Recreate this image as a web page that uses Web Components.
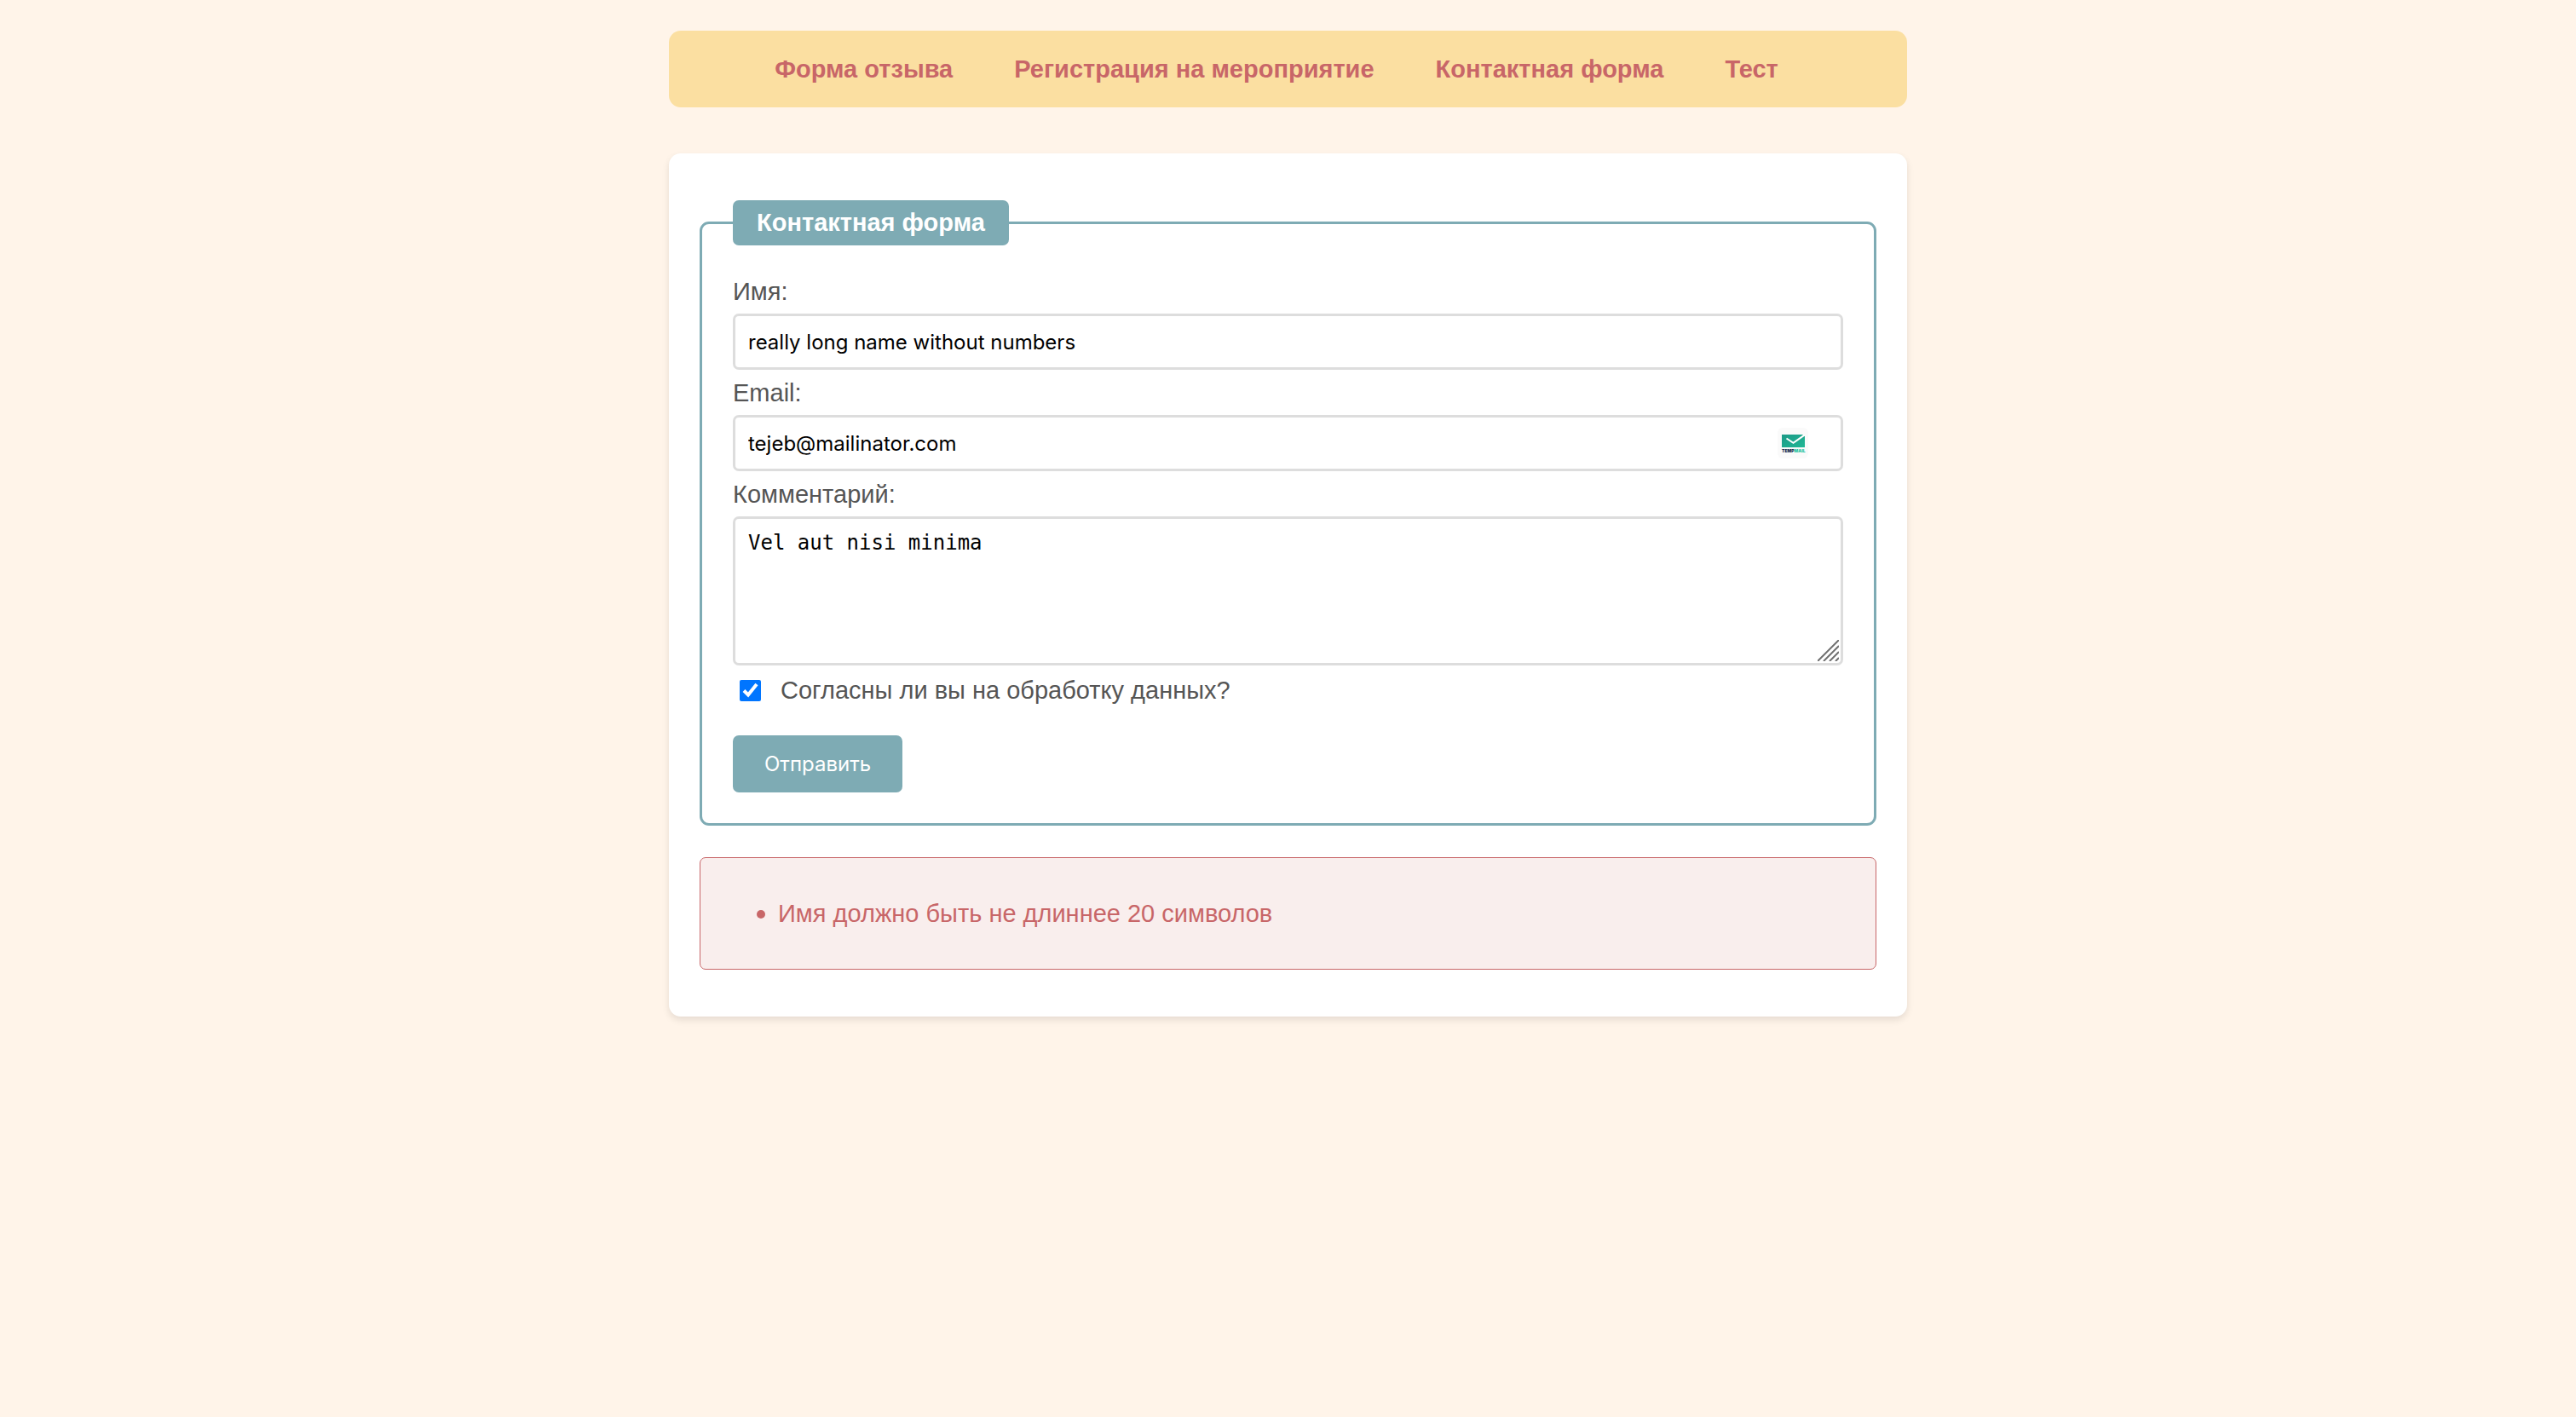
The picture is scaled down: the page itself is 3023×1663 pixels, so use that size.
<!DOCTYPE html>
<html lang="ru">
<head>
<meta charset="utf-8">
<meta name="viewport" content="width=device-width, initial-scale=1">
<title>Контактная форма</title>
<style>
  :root {
    --paper: #fff4e9;
    --sand: #fbdfa1;
    --teal: #7eabb4;
    --red: #c86668;
    --blush: #f9eeed;
    --line: #dddddd;
    --ui: Inter, "Liberation Sans", sans-serif;
    --mono: "DejaVu Sans Mono", monospace;
  }
  body {
    margin: 0;
    padding: 36px;
    background: var(--paper);
    color: #555;
    font: 29px/35px "Liberation Sans", Arial, sans-serif;
  }
  main, site-nav { width: 100%; max-width: 1453px; margin: 0 auto; }
</style>
</head>
<body>
<site-nav>
  <nav-link href="#feedback">Форма отзыва</nav-link>
  <nav-link href="#event">Регистрация на мероприятие</nav-link>
  <nav-link href="#contact">Контактная форма</nav-link>
  <nav-link href="#test">Тест</nav-link>
</site-nav>
<main>
  <form-card>
    <field-group legend="Контактная форма">
      <text-field label="Имя:" name="name" value="really long name without numbers"></text-field>
      <text-field label="Email:" name="email" type="email" value="tejeb@mailinator.com"><temp-mail slot="badge"></temp-mail></text-field>
      <text-area label="Комментарий:" name="comment" value="Vel aut nisi minima"></text-area>
      <check-field label="Согласны ли вы на обработку данных?" checked></check-field>
      <submit-button>Отправить</submit-button>
    </field-group>
    <error-list><error-item>Имя должно быть не длиннее 20 символов</error-item></error-list>
  </form-card>
</main>
<script>
  const define = (name, render) => customElements.define(name, class extends HTMLElement {
    connectedCallback() {
      if (this.shadowRoot) return;
      this.attachShadow({ mode: 'open' }).innerHTML =
        '<style>*{box-sizing:border-box}:host{display:block;box-sizing:border-box}</style>' + render(this);
    }
  });
  const attr = (el, name) => el.getAttribute(name) || '';

  define('site-nav', () => `
    <style>
      nav { display: flex; flex-wrap: wrap; justify-content: center; gap: 18px 72px;
            padding: 28px 27px 27px 0; border-radius: 14px; background: var(--sand); }
    </style>
    <nav><slot></slot></nav>`);

  define('nav-link', el => `
    <style>a { display: block; color: var(--red); font-weight: bold; text-decoration: none; }</style>
    <a href="${attr(el, 'href')}"><slot></slot></a>`);

  define('form-card', () => `
    <style>
      :host { margin-top: 54px; padding: 55px 36px; border-radius: 14px; background: #fff;
              box-shadow: 0 4px 9px rgba(0, 0, 0, .1); }
    </style>
    <slot></slot>`);

  define('field-group', el => `
    <style>
      fieldset { min-width: 0; margin: 0; padding: 37px 36px 36px; border: 3px solid var(--teal); border-radius: 11px; }
      legend { padding: 9px 28px; border-radius: 7px; background: var(--teal); color: #fff; font-weight: bold; }
    </style>
    <fieldset><legend>${attr(el, 'legend')}</legend><slot></slot></fieldset>`);

  define('text-field', el => `
    <style>
      :host { margin-bottom: 10px; }
      label { display: block; margin-bottom: 8px; }
      .box { position: relative; }
      input { display: block; width: 100%; height: 66px; padding: 0 15px; border: 3px solid var(--line);
              border-radius: 7px; background: #fff; color: #000; font: 24px/30px var(--ui); outline: 0; }
      ::slotted(*) { position: absolute; right: 41px; top: 15px; }
    </style>
    <label for="field">${attr(el, 'label')}</label>
    <div class="box">
      <input id="field" type="${attr(el, 'type') || 'text'}" name="${attr(el, 'name')}" value="${attr(el, 'value')}" spellcheck="false">
      <slot name="badge"></slot>
    </div>`);

  define('temp-mail', () => `
    <style>svg { display: block; width: 36px; height: 36px; }</style>
    <svg viewBox="0 0 36 36" aria-hidden="true">
      <defs><linearGradient id="g" x1="0" y1="0" x2="1" y2="1"><stop offset="0" stop-color="#1c9a87"/><stop offset="1" stop-color="#21b795"/></linearGradient></defs>
      <rect width="36" height="36" rx="6" fill="#fafafa"/>
      <path d="M5 8H29L32 10V23H5Z" fill="url(#g)"/>
      <path d="M10.5 12.5L18.5 17.8L31.5 8.6" fill="none" stroke="#fff" stroke-width="2"/>
      <text x="5" y="29" font-family="Inter, sans-serif" font-size="5" font-weight="900" fill="#14284b">TEMP<tspan fill="#27c3a0">MAIL</tspan></text>
    </svg>`);

  define('text-area', el => `
    <style>
      :host { margin-bottom: 12px; }
      label { display: block; margin-bottom: 8px; }
      .box { position: relative; }
      textarea { display: block; width: 100%; height: 175px; padding: 14px 15px; border: 3px solid var(--line);
                 border-radius: 7px; background: #fff; color: #000; font: 24px/28px var(--mono); resize: none; outline: 0; }
      svg { position: absolute; right: 5px; bottom: 5px; width: 25px; height: 25px; pointer-events: none; }
    </style>
    <label for="field">${attr(el, 'label')}</label>
    <div class="box">
      <textarea id="field" name="${attr(el, 'name')}" spellcheck="false">${attr(el, 'value')}</textarea>
      <svg viewBox="0 0 25 25" aria-hidden="true"><path d="M0 25L25 0M7 25L25 7M14 25L25 14M21 25L25 21" stroke="#707070" stroke-width="2"/></svg>
    </div>`);

  define('check-field', el => `
    <style>
      :host { display: flex; align-items: center; gap: 23px; padding-left: 8px; margin-bottom: 35px; }
      input { flex: none; width: 25px; height: 25px; margin: 0; accent-color: #0075ff; }
    </style>
    <input id="field" type="checkbox" ${el.hasAttribute('checked') ? 'checked' : ''}>
    <label for="field">${attr(el, 'label')}</label>`);

  define('submit-button', () => `
    <style>
      button { display: block; padding: 18px 37px; border: 0; border-radius: 7px; background: var(--teal);
               color: #fff; font: 24px/31px var(--ui); cursor: pointer; }
    </style>
    <button type="submit"><slot></slot></button>`);

  define('error-list', () => `
    <style>
      :host { margin-top: 37px; padding: 48px 36px 47px 66px; border: 1px solid var(--red); border-radius: 7px;
              background: var(--blush); color: var(--red); }
    </style>
    <div role="list"><slot></slot></div>`);

  define('error-item', () => `
    <style>
      :host { display: flex; align-items: center; gap: 15px; }
      i { flex: none; width: 10px; height: 10px; border-radius: 50%; background: currentColor; }
    </style>
    <i></i><span role="listitem"><slot></slot></span>`);
</script>
</body>
</html>
